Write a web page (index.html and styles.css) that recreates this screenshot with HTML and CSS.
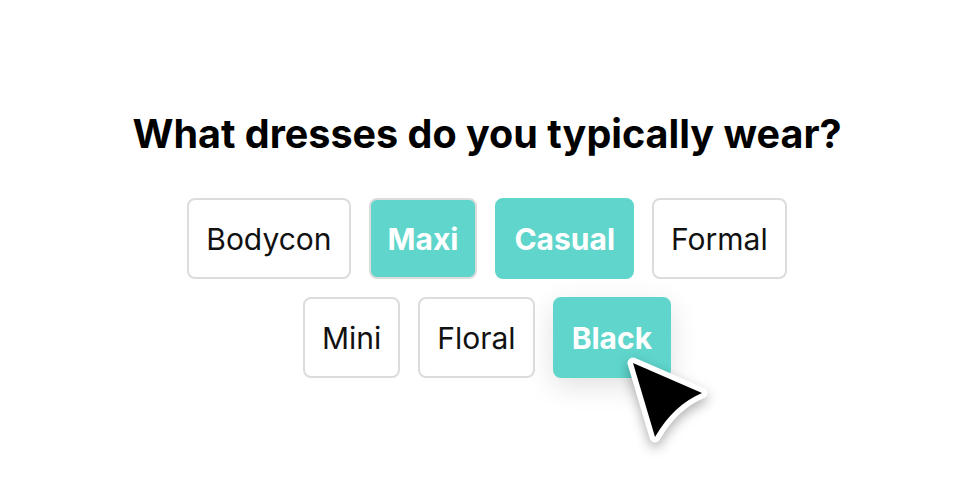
FILE: index.html
```html
<!DOCTYPE html>
<html lang="en">
<head>
    <meta charset="UTF-8">
    <meta name="viewport" content="width=device-width, initial-scale=1.0">
    <title>Dress Quiz</title>
    <link rel="stylesheet" href="styles.css">
</head>
    <body>
        <div class="quiz">
            <h1 class="question">What dresses do you typically wear?</h1>
            <div class="options">
                <div class="row">
                    <div class="option">Bodycon</div>
                    <div class="option selected outlined">Maxi</div>
                    <div class="option selected">Casual</div>
                    <div class="option">Formal</div>
                </div>
                <div class="row">
                    <div class="option">Mini</div>
                    <div class="option">Floral</div>
                    <div class="option selected hovered">Black
                        <svg class="cursor" width="100" height="100" viewBox="0 0 100 100">
                            <path d="M17 13 L86 43 Q57.5 55 39 87 Z" />
                        </svg>
                    </div>
                </div>
            </div>
        </div>
    </body>
</html>
```

FILE: styles.css
```css
html, body {
    height: 100%;
}

body {
    margin: 0;
    min-height: 480px;
    background: #fff;
    font-family: Inter, "Noto Sans", sans-serif;
}

.quiz {
    display: flex;
    flex-direction: column;
    align-items: center;
    padding-top: 110px;
    padding-bottom: 100px;
}

.question {
    margin: 0;
    font-size: 39.5px;
    line-height: 48px;
    font-weight: 700;
    color: #000;
}

.options {
    display: flex;
    flex-direction: column;
    align-items: center;
    gap: 18px;
    margin-top: 40px;
}

.row {
    display: flex;
    gap: 18px;
}

.option {
    position: relative;
    display: flex;
    align-items: center;
    height: 77px;
    padding: 0 17px;
    border: 2px solid #dcdcdc;
    border-radius: 8px;
    background: #fff;
    color: #111;
    font-size: 30px;
    font-weight: 400;
}

.option.selected {
    background: #5fd5cb;
    border-color: #5fd5cb;
    color: #fff;
    font-weight: 700;
}

.option.outlined {
    border-color: #dcdcdc;
}

.option.hovered {
    box-shadow: 0 8px 28px rgba(0, 0, 0, 0.12);
}

.cursor {
    position: absolute;
    left: 61px;
    top: 51px;
    overflow: visible;
    filter: drop-shadow(0 5px 6px rgba(0, 0, 0, 0.3));
}

.cursor path {
    fill: #000;
    stroke: #fff;
    stroke-width: 11;
    stroke-linejoin: round;
    paint-order: stroke;
}
```
